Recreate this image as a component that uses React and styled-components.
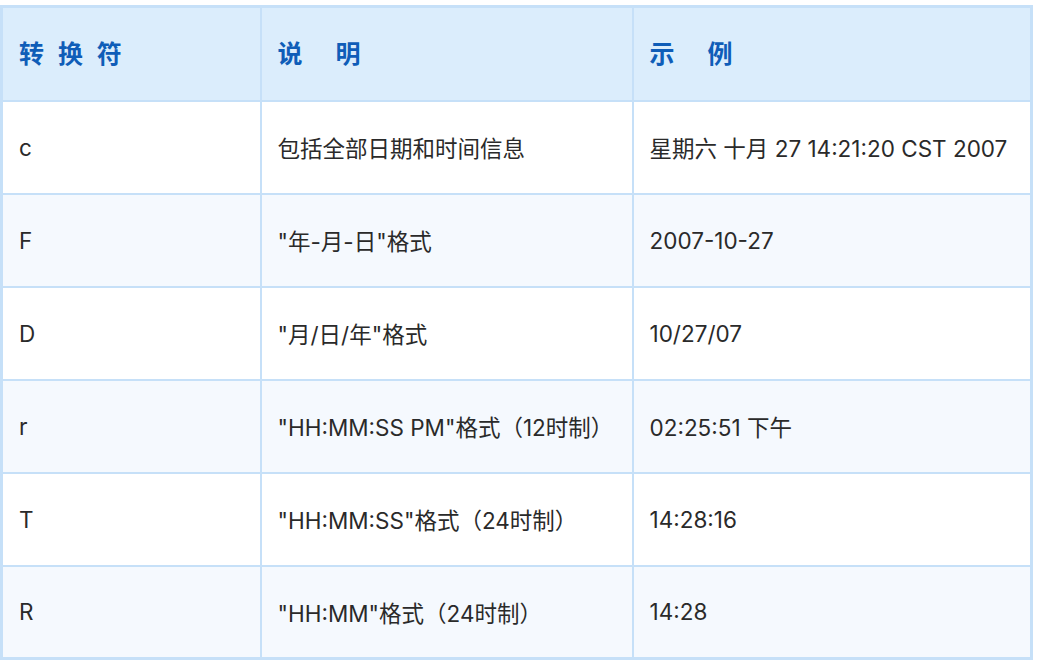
import styled, { createGlobalStyle } from "styled-components";

const GlobalStyle = createGlobalStyle`
    html, body {
        margin: 0;
        padding: 0;
        background: #ffffff;
    }
    body {
        font-family: Inter, "Noto Sans CJK SC", sans-serif;
    }
`;

const rows = [
    { code: "c", desc: "包括全部日期和时间信息", sample: "星期六 十月 27 14:21:20 CST 2007" },
    { code: "F", desc: "\"年-月-日\"格式", sample: "2007-10-27" },
    { code: "D", desc: "\"月/日/年\"格式", sample: "10/27/07" },
    { code: "r", desc: "\"HH:MM:SS PM\"格式（12时制）", sample: "02:25:51 下午" },
    { code: "T", desc: "\"HH:MM:SS\"格式（24时制）", sample: "14:28:16" },
    { code: "R", desc: "\"HH:MM\"格式（24时制）", sample: "14:28" },
];

export default function App() {
    return (
        <Page>
            <GlobalStyle />
            <Table>
                <colgroup>
                    <col style={{ width: 259 }} />
                    <col style={{ width: 372 }} />
                    <col />
                </colgroup>
                <thead>
                    <tr>
                        <HeadCell>转 换 符</HeadCell>
                        <HeadCell>说　明</HeadCell>
                        <HeadCell>示　例</HeadCell>
                    </tr>
                </thead>
                <tbody>
                    {rows.map((r, i) => (
                        <Row key={r.code} $striped={i % 2 === 1}>
                            <Cell>{r.code}</Cell>
                            <Cell>{r.desc}</Cell>
                            <Cell>{r.sample}</Cell>
                        </Row>
                    ))}
                </tbody>
            </Table>
        </Page>
    );
}

const Page = styled.div`
    width: 1037px;
    height: 665px;
    padding: 5px 0 0 0;
    box-sizing: border-box;
    background: #ffffff;
`

const Table = styled.table`
    width: 1033px;
    border-collapse: collapse;
    table-layout: fixed;
    border: 3px solid #c6e0f8;
`

const HeadCell = styled.th`
    height: 94px;
    padding: 0 0 4px 16px;
    text-align: left;
    background: #dbedfc;
    color: #0f5db8;
    font-size: 25px;
    font-weight: 700;
    letter-spacing: 4px;
    border: 2px solid #c6e0f8;
    box-sizing: border-box;
`

const Row = styled.tr`
    background: ${(p) => (p.$striped ? "#f5f9fe" : "#ffffff")};
`

const Cell = styled.td`
    height: 93px;
    padding: 0 0 0 16px;
    font-size: 22.5px;
    color: #2a2a2a;
    border: 2px solid #c6e0f8;
    box-sizing: border-box;
    white-space: nowrap;
`
